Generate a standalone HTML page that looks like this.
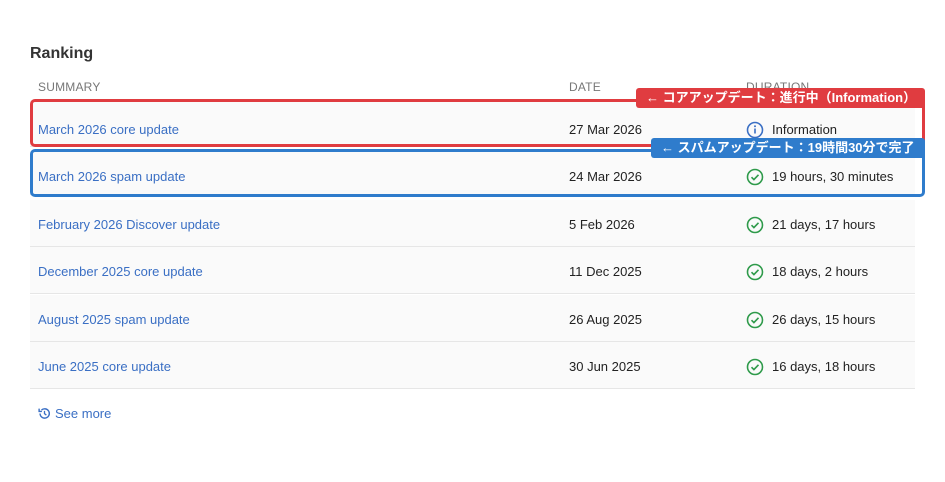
<!DOCTYPE html>
<html><head><meta charset="utf-8"><style>
*{margin:0;padding:0;box-sizing:border-box}
body{width:945px;height:482px;background:#fff;font-family:"Liberation Sans","Noto Sans CJK JP",sans-serif;position:relative;overflow:hidden;color:#222}
h2{position:absolute;left:30px;top:45px;font-size:16px;font-weight:bold;color:#333}
.hd{position:absolute;top:80px;font-size:12px;color:#777;letter-spacing:.2px}
.row{position:absolute;left:30px;width:885px;height:47px;background:#fafafa;border-bottom:1px solid #e6e6e6;font-size:13px}
.row span{position:absolute;top:17px}
.s{left:8px;color:#3a6fc4}
.d{left:539px;color:#222}
.u{left:742px;color:#222}
.u svg{position:absolute;left:-26px;top:-1px}
.box{position:absolute;left:30px;width:895px;height:48px;border:3px solid;border-radius:5px}
.lbl{position:absolute;height:20px;color:#fff;font-size:13px;font-weight:bold;line-height:20px;padding-left:10px;border-radius:3px;white-space:nowrap}
.more{position:absolute;left:38px;top:406px;font-size:13px;color:#3a6fc4}
.more svg{vertical-align:-2px;margin-right:4px}
</style></head><body>
<h2>Ranking</h2>
<div class="hd" style="left:38px">SUMMARY</div>
<div class="hd" style="left:569px">DATE</div>
<div class="hd" style="left:746px">DURATION</div>

<div class="row" style="top:100px"><span class="s" style="top:22px">March 2026 core update</span><span class="d" style="top:22px">27 Mar 2026</span><span class="u" style="top:22px"><svg width="18" height="18" viewBox="0 0 18 18"><circle cx="9" cy="9" r="7.5" fill="none" stroke="#3a6fc4" stroke-width="1.6"/><rect x="8.2" y="7.5" width="1.6" height="5" fill="#3a6fc4"/><circle cx="9" cy="5.3" r="1" fill="#3a6fc4"/></svg>Information</span></div>
<div class="row" style="top:152px;height:43px"><span class="s" style="top:17px">March 2026 spam update</span><span class="d" style="top:17px">24 Mar 2026</span><span class="u" style="top:17px"><svg width="18" height="18" viewBox="0 0 18 18"><circle cx="9" cy="9" r="7.5" fill="none" stroke="#2e9a4a" stroke-width="1.6"/><path d="M5.5 9.2l2.4 2.4 4.6-4.8" fill="none" stroke="#2e9a4a" stroke-width="1.6"/></svg>19 hours, 30 minutes</span></div>
<div class="row" style="top:200px"><span class="s">February 2026 Discover update</span><span class="d">5 Feb 2026</span><span class="u"><svg width="18" height="18" viewBox="0 0 18 18"><circle cx="9" cy="9" r="7.5" fill="none" stroke="#2e9a4a" stroke-width="1.6"/><path d="M5.5 9.2l2.4 2.4 4.6-4.8" fill="none" stroke="#2e9a4a" stroke-width="1.6"/></svg>21 days, 17 hours</span></div>
<div class="row" style="top:247px"><span class="s">December 2025 core update</span><span class="d">11 Dec 2025</span><span class="u"><svg width="18" height="18" viewBox="0 0 18 18"><circle cx="9" cy="9" r="7.5" fill="none" stroke="#2e9a4a" stroke-width="1.6"/><path d="M5.5 9.2l2.4 2.4 4.6-4.8" fill="none" stroke="#2e9a4a" stroke-width="1.6"/></svg>18 days, 2 hours</span></div>
<div class="row" style="top:295px"><span class="s">August 2025 spam update</span><span class="d">26 Aug 2025</span><span class="u"><svg width="18" height="18" viewBox="0 0 18 18"><circle cx="9" cy="9" r="7.5" fill="none" stroke="#2e9a4a" stroke-width="1.6"/><path d="M5.5 9.2l2.4 2.4 4.6-4.8" fill="none" stroke="#2e9a4a" stroke-width="1.6"/></svg>26 days, 15 hours</span></div>
<div class="row" style="top:342px"><span class="s">June 2025 core update</span><span class="d">30 Jun 2025</span><span class="u"><svg width="18" height="18" viewBox="0 0 18 18"><circle cx="9" cy="9" r="7.5" fill="none" stroke="#2e9a4a" stroke-width="1.6"/><path d="M5.5 9.2l2.4 2.4 4.6-4.8" fill="none" stroke="#2e9a4a" stroke-width="1.6"/></svg>16 days, 18 hours</span></div>

<div class="box" style="top:99px;border-color:#e03c40"></div>
<div class="box" style="top:149px;border-color:#2f7ccc"></div>
<div class="lbl" style="left:636px;top:88px;width:289px;background:#e03c40">← コアアップデート：進行中（Information）</div>
<div class="lbl" style="left:651px;top:138px;width:274px;background:#2f7ccc">← スパムアップデート：19時間30分で完了</div>

<div class="more"><svg width="13" height="13" viewBox="0 0 14 14"><path d="M2.2 7a5 5 0 1 0 1.5-3.6" fill="none" stroke="#3a6fc4" stroke-width="1.5"/><path d="M1.2 1.8v3h3" fill="none" stroke="#3a6fc4" stroke-width="1.5"/><path d="M7 4.2v3l2 1.5" fill="none" stroke="#3a6fc4" stroke-width="1.4"/></svg>See more</div>
</body></html>
